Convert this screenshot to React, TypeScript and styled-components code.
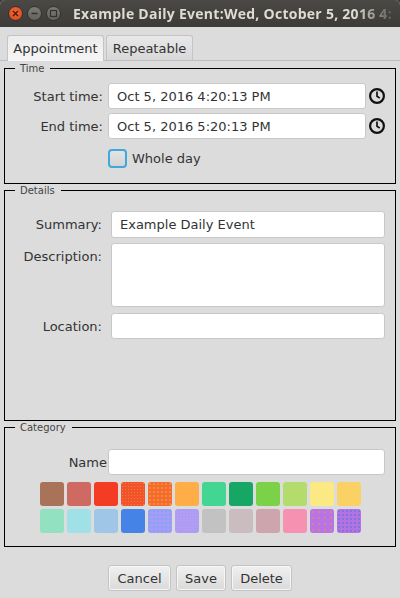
import React from "react";
import styled, { createGlobalStyle } from "styled-components";

const Global = createGlobalStyle`
  html, body { margin: 0; padding: 0; background: #3a3936; }
  * { box-sizing: border-box; }
  #root { width: 400px; height: 598px; overflow: hidden; }
`;

const Win = styled.div`
  width: 400px; height: 598px; display: flex; flex-direction: column;
  background: #dcdcdc; font-family: "DejaVu Sans", sans-serif; font-size: 13px; color: #333;
  border-radius: 5px 5px 0 0; overflow: hidden;
`;
const TitleBar = styled.div`
  height: 27px; flex: none; display: flex; align-items: center; padding-left: 8px;
  background: linear-gradient(#4a4945, #3c3b37);
`;
const WinBtn = styled.div<{ $close?: boolean }>`
  width: 15px; height: 15px; border-radius: 50%; margin-right: 4px; display: flex; align-items: center; justify-content: center;
  background: ${p => p.$close ? "radial-gradient(circle at 50% 40%, #f2693a, #d9431a)" : "linear-gradient(#7c7b76, #63625d)"};
  border: 1px solid #33322f;
`;
const TitleText = styled.div`
  margin-left: 8px; flex: 1; overflow: hidden; white-space: nowrap; font-family: "Open Sans", sans-serif; font-weight: 700; font-size: 14px; letter-spacing: 0.27px; color: #dfdbd2;
  -webkit-mask-image: linear-gradient(90deg, #000 86%, transparent 100%);
  mask-image: linear-gradient(90deg, #000 86%, transparent 100%);
`;
const TabBar = styled.div`
  height: 34px; flex: none; display: flex; align-items: flex-end; gap: 2px; padding: 0 0 0 7px; border-bottom: 1px solid #bdbdbd;
`;
const Tab = styled.div<{ $active?: boolean; $w: number }>`
  width: ${p => p.$w}px; height: ${p => p.$active ? 26 : 25}px; display: flex; align-items: center; justify-content: center; border: 1px solid #c4c4c4; border-bottom: none; border-radius: 3px 3px 0 0; margin-bottom: ${p => p.$active ? -1 : 0}px;
  background: ${p => p.$active ? "linear-gradient(#ececec, #f5f5f5)" : "linear-gradient(#e8e8e8, #d8d8d8)"};
  color: #333; font-size: 13px; white-space: nowrap;
`;
const Content = styled.div`
  flex: none; display: flex; flex-direction: column; padding: 2px 4px 0 4px; gap: 1px;
`;
const Group = styled.fieldset<{ $h: number }>`
  margin: 0; padding: 0; border: 1px solid #000; height: ${p => p.$h}px; width: 392px; min-width: 0; display: block;
`;
const Legend = styled.legend`
  margin-left: 10px; padding: 0 6px 0 5px; font-size: 10px; line-height: 11px; height: 11px; color: #444;
`;
const Body = styled.div<{ $pt: number; $gap: number }>`
  display: flex; flex-direction: column; padding-top: ${p => p.$pt}px; gap: ${p => p.$gap}px;
`;
const Row = styled.div<{ $top?: boolean; $mt?: number }>`
  display: flex; align-items: ${p => p.$top ? "flex-start" : "center"}; margin-top: ${p => p.$mt ?? 0}px;
`;
const Label = styled.div<{ $w: number; $pt?: number }>`
  width: ${p => p.$w}px; flex: none; text-align: right; color: #333; white-space: nowrap; padding-top: ${p => p.$pt ?? 0}px;
`;
const Input = styled.div<{ $w: number; $h?: number; $ml: number }>`
  width: ${p => p.$w}px; height: ${p => p.$h ?? 26}px; margin-left: ${p => p.$ml}px; flex: none; background: #fff; border: 1px solid #c8c8c8; border-radius: 3px; padding-left: 8px; display: flex; align-items: center; color: #333; white-space: nowrap;
`;
const ClockWrap = styled.div`
  margin-left: 3px; width: 16px; height: 16px; flex: none; display: flex;
`;
const Check = styled.div`
  width: 19px; height: 19px; margin-left: 103px; border-radius: 4px; border: 2px solid #3fa9dc; background: linear-gradient(#e4e4e4, #d4d4d4);
`;
const CheckLabel = styled.div` margin-left: 5px; color: #333; `;
const Swatches = styled.div`
  display: grid; grid-template-columns: repeat(12, 24px); grid-auto-rows: 24px; gap: 3px; margin-left: 35px;
`;
const Swatch = styled.div<{ $c: string; $dot?: string; $size?: number }>`
  border-radius: 3px; background-color: ${p => p.$c};
  ${p => p.$dot ? `background-image: radial-gradient(${p.$dot} 0.6px, transparent 0.9px); background-size: ${p.$size ?? 3}px ${p.$size ?? 3}px;` : ""}
`;
const Footer = styled.div`
  flex: 1; display: flex; gap: 5px; padding: 18px 0 0 108px;
`;
const Btn = styled.div<{ $w: number }>`
  width: ${p => p.$w}px; height: 26px; display: flex; align-items: center; justify-content: center; border: 1px solid #c4c4c4; border-radius: 3px; background: linear-gradient(#f0f0f0, #dadada); color: #333; box-shadow: inset 0 0 0 1px #f6f6f6;
`;

const Clock = () => (
  <svg width="16" height="16" viewBox="0 0 16 16" fill="none" stroke="#111">
    <circle cx="8" cy="8" r="6.9" strokeWidth="2.2" />
    <path d="M8 3.6v4.6l2.8 1.9" strokeWidth="1.7" />
  </svg>
);

const swatches: [string, string?, number?][] = [
  ["#a9735a"], ["#cf6a62"], ["#f43c25"], ["#f4522a", "#e8823a", 3], ["#f7692f", "#e9a43c", 4], ["#ffad46"], ["#42d692"], ["#16a765"], ["#7bd148"], ["#b3dc6c"], ["#fbe983"], ["#fad165"],
  ["#92e1c0"], ["#9fe1e7"], ["#9fc6e7"], ["#4584e6"], ["#a39cf8", "#72a8e8", 4], ["#ad9ff5", "#c08ae8", 3], ["#c2c2c2"], ["#cabdbf"], ["#cca6ac"], ["#f691b2"], ["#b874e2", "#e88a6a", 6], ["#b374e2", "#6a70e0", 4],
];

export default function App() {
  return (
    <Win>
      <Global />
      <TitleBar>
        <WinBtn $close>
          <svg width="9" height="9" viewBox="0 0 9 9" stroke="#4a1a08" strokeWidth="1.4"><path d="M2 2l5 5M7 2l-5 5" /></svg>
        </WinBtn>
        <WinBtn>
          <svg width="9" height="9" viewBox="0 0 9 9" stroke="#33322f" strokeWidth="1.4"><path d="M1.5 4.5h6" /></svg>
        </WinBtn>
        <WinBtn>
          <svg width="9" height="9" viewBox="0 0 9 9" fill="none" stroke="#33322f" strokeWidth="1.2"><rect x="1.5" y="1.5" width="6" height="6" /></svg>
        </WinBtn>
        <TitleText>Example Daily Event:Wed, October 5, 2016 4:</TitleText>
      </TitleBar>
      <TabBar>
        <Tab $active $w={97}>Appointment</Tab>
        <Tab $w={87}>Repeatable</Tab>
      </TabBar>
      <Content>
        <Group $h={121}>
          <Legend>Time</Legend>
          <Body $pt={9} $gap={4}>
            <Row>
              <Label $w={98}>Start time:</Label>
              <Input $w={258} $ml={5}>Oct 5, 2016 4:20:13 PM</Input>
              <ClockWrap><Clock /></ClockWrap>
            </Row>
            <Row>
              <Label $w={98}>End time:</Label>
              <Input $w={258} $ml={5}>Oct 5, 2016 5:20:13 PM</Input>
              <ClockWrap><Clock /></ClockWrap>
            </Row>
            <Row $mt={6}>
              <Check />
              <CheckLabel>Whole day</CheckLabel>
            </Row>
          </Body>
        </Group>
        <Group $h={236}>
          <Legend>Details</Legend>
          <Body $pt={15} $gap={5}>
            <Row>
              <Label $w={97}>Summary:</Label>
              <Input $w={274} $h={27} $ml={9}>Example Daily Event</Input>
            </Row>
            <Row $top>
              <Label $w={97} $pt={6}>Description:</Label>
              <Input $w={274} $h={64} $ml={9} />
            </Row>
            <Row $mt={1}>
              <Label $w={97}>Location:</Label>
              <Input $w={274} $ml={9} />
            </Row>
          </Body>
        </Group>
        <Group $h={125}>
          <Legend>Category</Legend>
          <Body $pt={16} $gap={7}>
            <Row>
              <Label $w={102}>Name</Label>
              <Input $w={277} $ml={1} />
            </Row>
            <Swatches>
              {swatches.map(([c, d, s], i) => <Swatch key={i} $c={c} $dot={d} $size={s} />)}
            </Swatches>
          </Body>
        </Group>
      </Content>
      <Footer>
        <Btn $w={63}>Cancel</Btn>
        <Btn $w={50}>Save</Btn>
        <Btn $w={61}>Delete</Btn>
      </Footer>
    </Win>
  );
}
